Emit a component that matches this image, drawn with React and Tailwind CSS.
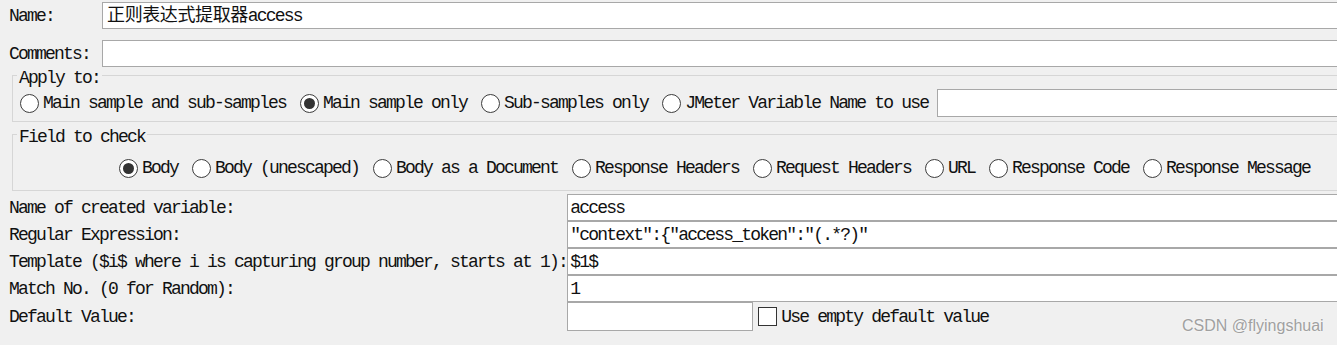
import React from "react";

function Radio({ checked, label }) {
  return (
    <div className="flex items-center gap-[4px] shrink-0">
      <div className="w-[19px] h-[19px] rounded-full border border-[#3c3c3c] bg-white flex items-center justify-center shrink-0">
        {checked && <div className="w-[11px] h-[11px] rounded-full bg-[#333333]" />}
      </div>
      <span className="whitespace-pre">{label}</span>
    </div>
  );
}

function Field({ className = "", children }) {
  return (
    <div className={"border border-[#a8a8a8] bg-white flex items-center whitespace-pre overflow-hidden " + className}>
      {children}
    </div>
  );
}

export default function App() {
  const lower = [
    ["Name of created variable:", "access"],
    ["Regular Expression:", '"context":{"access_token":"(.*?)"'],
    ["Template ($i$ where i is capturing group number, starts at 1):", "$1$"],
    ["Match No. (0 for Random):", "1"],
  ];
  return (
    <div className="relative w-full h-[345px] overflow-hidden bg-[#f0f0f0] text-[#111111] text-[18px] leading-[20px] tracking-[-1.8px] font-['Liberation_Mono','Noto_Sans_CJK_SC',monospace]">
      <div className="w-[1417px] pt-[2px]">
        {/* Name / Comments */}
        <div className="grid grid-cols-[auto_1fr] gap-x-[12px] gap-y-[11px] pl-[9px] items-center">
          <span>Name:</span>
          <Field className="h-[27px] pl-[4px]">
            <span className="tracking-[-0.4px]">正则表达式提取器</span>
            <span>access</span>
          </Field>
          <span>Comments:</span>
          <Field className="h-[27px]" />
        </div>

        {/* Apply to */}
        <fieldset className="ml-[12px] border border-[#d6d6d6] pb-[4px]">
          <legend className="ml-[4px] px-[2px] leading-[16px]">
            <span className="relative top-[3px]">Apply to:</span>
          </legend>
          <div className="flex items-center pt-[6px] pl-[7px]">
            <div className="flex items-center gap-[14px]">
              <Radio label="Main sample and sub-samples" />
              <Radio checked label="Main sample only" />
              <Radio label="Sub-samples only" />
              <Radio label="JMeter Variable Name to use" />
            </div>
            <Field className="ml-[9px] flex-1 h-[28px]" />
          </div>
        </fieldset>

        {/* Field to check */}
        <fieldset className="ml-[12px] mt-[4px] border border-[#d6d6d6] pb-[12px]">
          <legend className="ml-[4px] px-[2px] leading-[16px]">
            <span className="relative top-[3px]">Field to check</span>
          </legend>
          <div className="flex items-center justify-center gap-[14px] pt-[16px] h-[36px]">
            <Radio checked label="Body" />
            <Radio label="Body (unescaped)" />
            <Radio label="Body as a Document" />
            <Radio label="Response Headers" />
            <Radio label="Request Headers" />
            <Radio label="URL" />
            <Radio label="Response Code" />
            <Radio label="Response Message" />
          </div>
        </fieldset>

        {/* Lower form */}
        <div className="mt-[3px] grid grid-cols-[auto_1fr] pl-[9px]">
          {lower.map(([label, value]) => (
            <React.Fragment key={label}>
              <div className="h-[27px] flex items-center whitespace-pre">{label}</div>
              <Field className="h-[27px] pl-[2px]">{value}</Field>
            </React.Fragment>
          ))}
          <div className="h-[29px] flex items-center whitespace-pre">Default Value:</div>
          <div className="flex items-center">
            <Field className="w-[186px] h-[29px]" />
            <div className="ml-[5px] w-[19px] h-[19px] border border-[#333333] bg-white shrink-0" />
            <span className="ml-[4px] whitespace-pre">Use empty default value</span>
          </div>
        </div>
      </div>

      <div className="absolute left-[1182px] top-[316px] font-['Liberation_Sans',Arial,sans-serif] text-[16px] leading-[20px] tracking-normal text-[#a0a0a0] [text-shadow:0_0_2px_#ffffff] whitespace-pre">
        CSDN @flyingshuai
      </div>
    </div>
  );
}
